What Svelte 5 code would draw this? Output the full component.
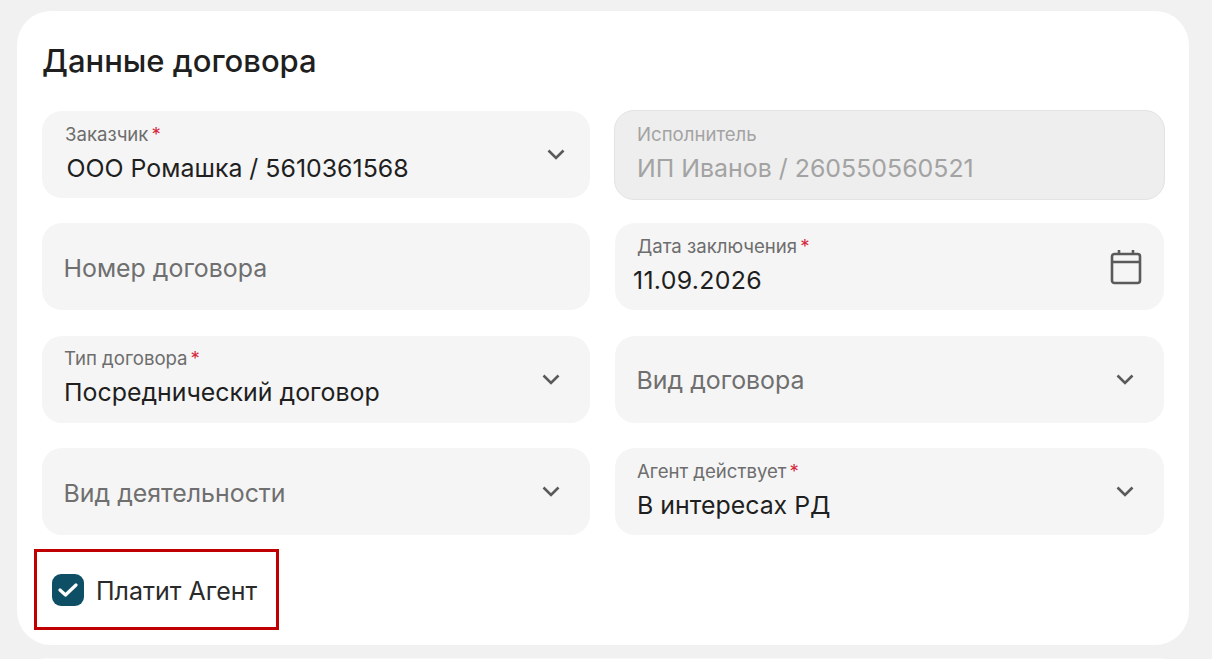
<script>
  const chevron = 'M1 1.5 L8.5 9 L16 1.5';
</script>

<div class="page">
  <section class="card">
    <h2>Данные договора</h2>
    <div class="grid">
      <div class="field shift-a">
        <div class="text">
          <span class="label">Заказчик<b>*</b></span>
          <span class="value">ООО Ромашка / 5610361568</span>
        </div>
        <svg class="chev" width="18" height="11" viewBox="0 0 17 11"><path d={chevron} /></svg>
      </div>
      <div class="field disabled">
        <div class="text">
          <span class="label">Исполнитель</span>
          <span class="value">ИП Иванов / 260550560521</span>
        </div>
      </div>
      <div class="field empty">
        <div class="text"><span class="placeholder">Номер договора</span></div>
      </div>
      <div class="field date">
        <div class="text">
          <span class="label">Дата заключения<b>*</b></span>
          <span class="value">11.09.2026</span>
        </div>
        <svg class="cal" width="32" height="36" viewBox="0 0 32 36">
          <rect x="2" y="5" width="28" height="29" rx="2.5" />
          <path d="M2 13 H30 M9 1 V6 M23 1 V6" />
        </svg>
      </div>
      <div class="field">
        <div class="text">
          <span class="label">Тип договора<b>*</b></span>
          <span class="value">Посреднический договор</span>
        </div>
        <svg class="chev" width="18" height="11" viewBox="0 0 17 11"><path d={chevron} /></svg>
      </div>
      <div class="field empty">
        <div class="text"><span class="placeholder">Вид договора</span></div>
        <svg class="chev" width="18" height="11" viewBox="0 0 17 11"><path d={chevron} /></svg>
      </div>
      <div class="field empty">
        <div class="text"><span class="placeholder">Вид деятельности</span></div>
        <svg class="chev" width="18" height="11" viewBox="0 0 17 11"><path d={chevron} /></svg>
      </div>
      <div class="field">
        <div class="text">
          <span class="label">Агент действует<b>*</b></span>
          <span class="value">В интересах РД</span>
        </div>
        <svg class="chev" width="18" height="11" viewBox="0 0 17 11"><path d={chevron} /></svg>
      </div>
    </div>
    <div class="check-box">
      <span class="check">
        <svg width="20" height="14" viewBox="0 0 20 14"><path d="M2 7 L7.5 12 L18 2" /></svg>
      </span>
      <span class="check-label">Платит Агент</span>
    </div>
  </section>
  <div class="next"></div>
</div>

<style>
  :global(body) {
    margin: 0;
    background: #f1f1f1;
    font-family: Inter, "Liberation Sans", sans-serif;
  }
  .page {
    height: 659px;
    overflow: hidden;
    padding: 11px 23px 0 17px;
    box-sizing: border-box;
  }
  .card {
    height: 634px;
    box-sizing: border-box;
    background: #fff;
    border-radius: 34px;
    padding: 32px 25px 0;
  }
  h2 {
    margin: 0;
    font-size: 31px;
    line-height: 36px;
    font-weight: 500;
    color: #1f1f1f;
  }
  .grid {
    display: grid;
    grid-template-columns: 548px 549px;
    grid-auto-rows: 87px;
    column-gap: 25px;
    row-gap: 25.4px;
    margin-top: 32px;
  }
  .field {
    background: #f5f5f5;
    border-radius: 20px;
    display: flex;
    align-items: center;
    justify-content: space-between;
    padding: 0 30px 0 22px;
    box-sizing: border-box;
  }
  .text {
    display: flex;
    flex-direction: column;
    min-width: 0;
    padding-bottom: 3px;
  }
  .label {
    font-size: 18.6px;
    line-height: 22px;
    color: #6d6d6d;
  }
  .label b {
    color: #d5283c;
    font-weight: 400;
    margin-left: 3px;
  }
  .value {
    font-size: 24.9px;
    line-height: 32px;
    color: #1f1f1f;
    margin-top: 7px;
  }
  .placeholder {
    font-size: 24.9px;
    line-height: 32px;
    color: #6f6f6f;
    padding-top: 5px;
  }
  .empty .text { margin-left: -0.5px; }
  .chev {
    fill: none;
    stroke: #5a5a5a;
    stroke-width: 2.6;
    flex: none;
  }
  .shift-a { padding-left: 23px; padding-right: 25px; }
  .shift-a .value { margin-left: 1.5px; }
  .disabled {
    background: #eeeeee;
    border: 1.5px solid #e3e3e3;
    margin: -1.5px -1px -1.5px -1px;
    height: 90px;
  }
  .disabled .label, .disabled .value { color: #a3a3a3; }
  .date { padding-right: 22px; }
  .date .value { margin-left: -4px; letter-spacing: 0.3px; }
  .cal {
    fill: none;
    stroke: #5a5a5a;
    stroke-width: 2.6;
    flex: none;
  }
  .check-box {
    width: 245px;
    height: 81px;
    box-sizing: border-box;
    border: 3px solid #c00000;
    margin: 14px 0 0 -8px;
    display: flex;
    align-items: center;
    gap: 13px;
    padding-left: 15px;
  }
  .check {
    width: 32px;
    height: 32px;
    border-radius: 9px;
    background: #0f4f66;
    display: flex;
    align-items: center;
    justify-content: center;
  }
  .check svg {
    fill: none;
    stroke: #fff;
    stroke-width: 3.2;
    stroke-linecap: round;
    stroke-linejoin: round;
  }
  .check-label {
    font-size: 25px;
    color: #2a2a2a;
    line-height: 32px;
    margin-left: -1px;
    padding-top: 2px;
  }
  .next {
    height: 30px;
    margin-top: 13px;
    background: #fff;
    border-radius: 34px 34px 0 0;
    opacity: 0.5;
  }
</style>
